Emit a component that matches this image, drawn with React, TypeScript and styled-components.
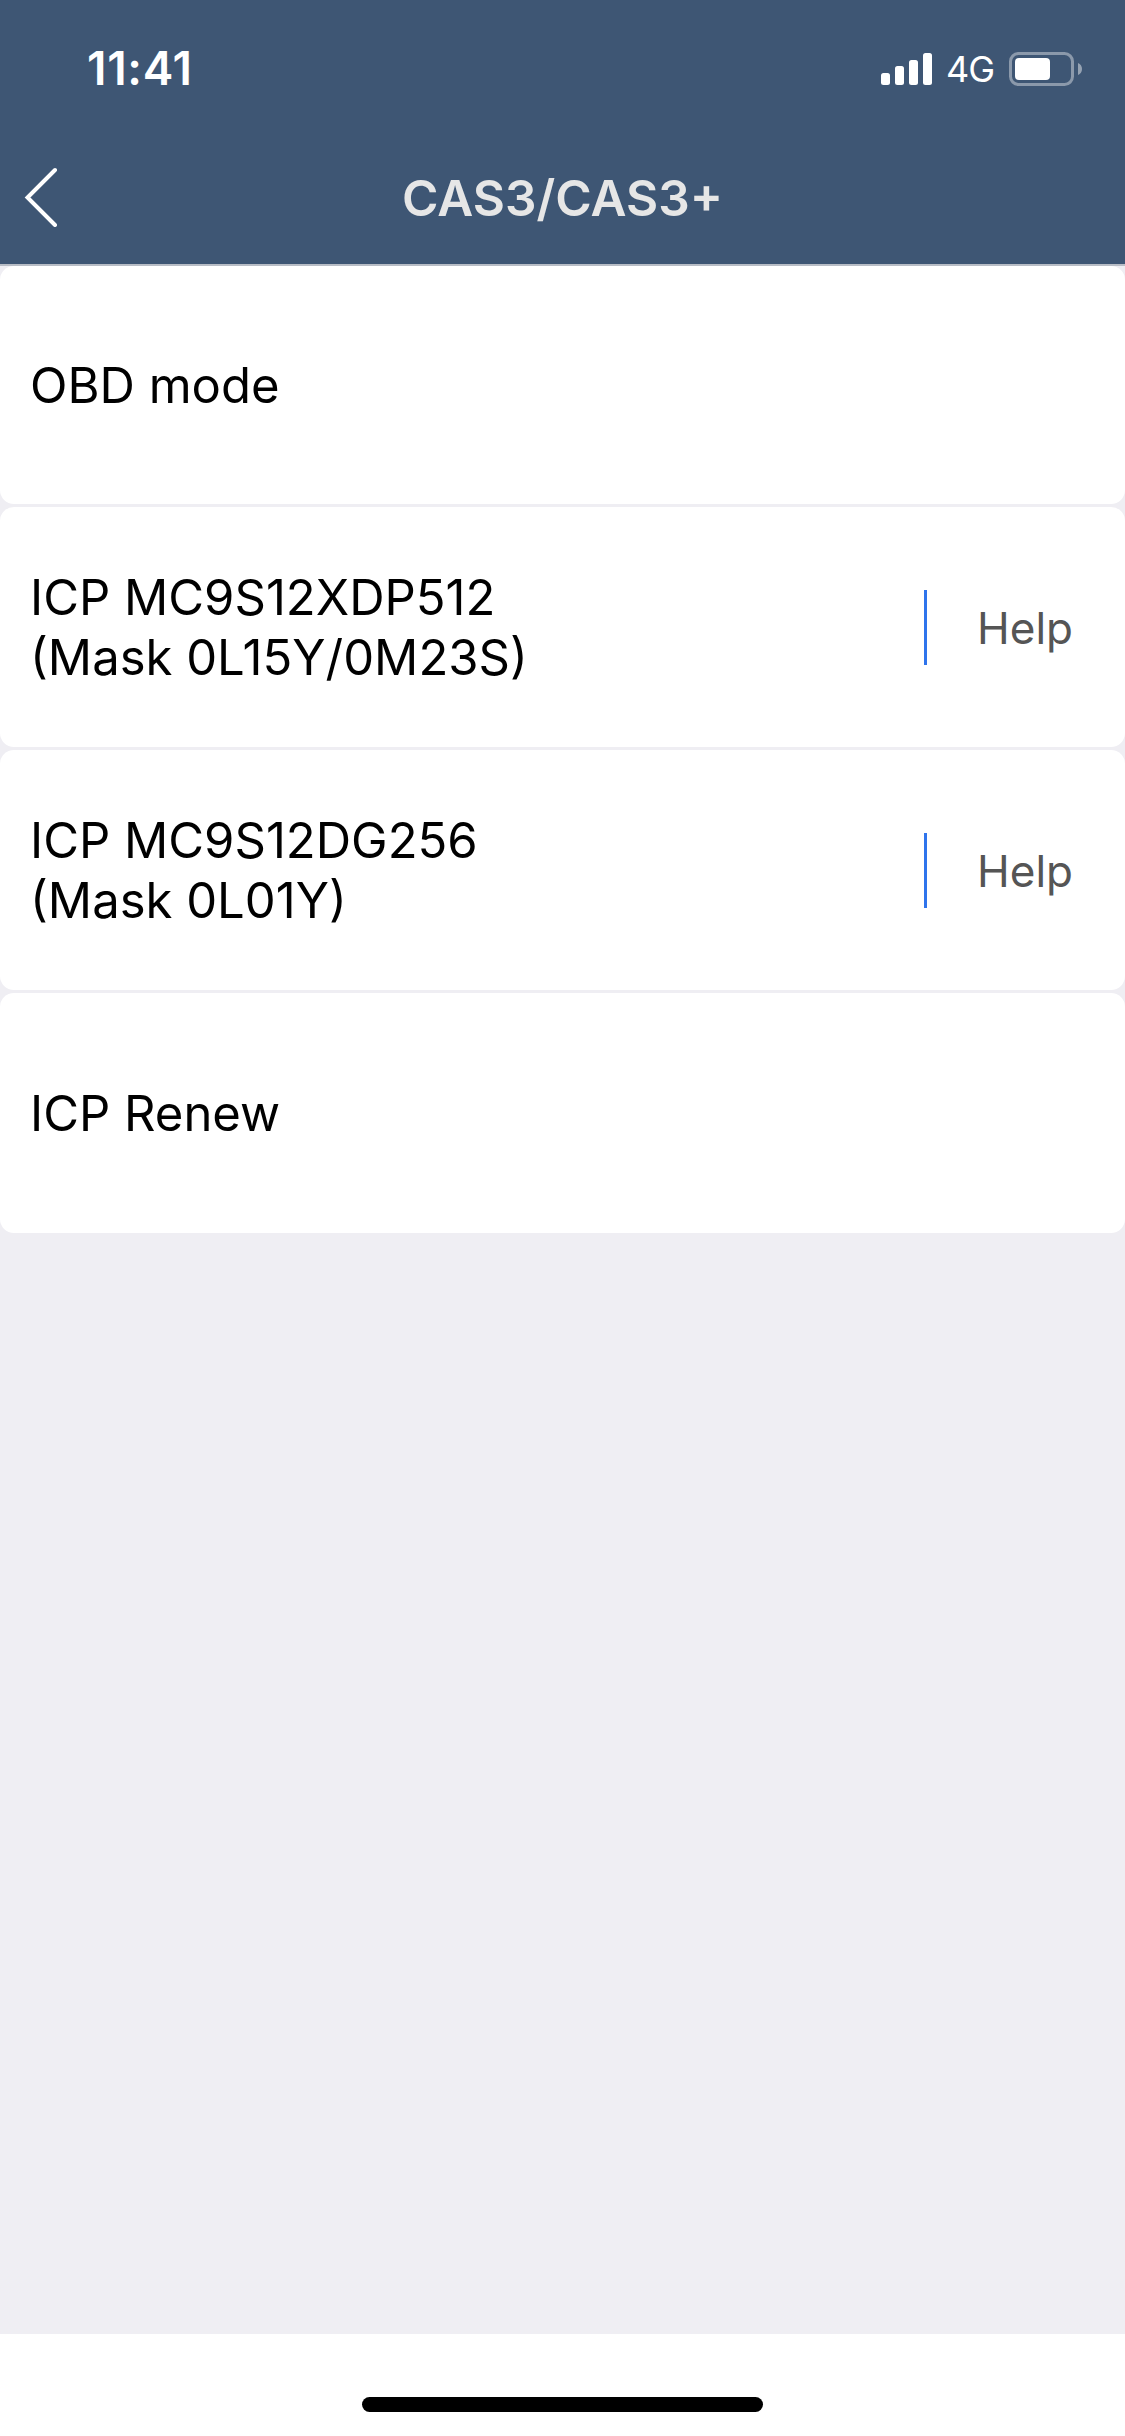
import React from "react";
import styled, { createGlobalStyle } from "styled-components";

const GlobalStyle = createGlobalStyle`
  html, body {
    margin: 0;
    padding: 0;
    background: #efeef3;
  }
  * {
    box-sizing: border-box;
  }
`;

const Page = styled.div`
  width: 1125px;
  height: 2436px;
  display: flex;
  flex-direction: column;
  background: #efeef3;
  font-family: Inter, "Liberation Sans", sans-serif;
  overflow: hidden;
`;

const Header = styled.header`
  height: 266px;
  flex-shrink: 0;
  background: #3e5674;
  border-bottom: 2px solid #b8bdc6;
  display: flex;
  flex-direction: column;
`;

const StatusBar = styled.div`
  height: 132px;
  padding: 44px 43px 0 87px;
  display: flex;
  justify-content: space-between;
  align-items: flex-start;
  color: #fff;
`;

const Time = styled.span`
  font-size: 46px;
  line-height: 48px;
  font-weight: 600;
  letter-spacing: 0.7px;
`;

const StatusIcons = styled.div`
  display: flex;
  align-items: center;
  height: 50px;
`;

const NetworkLabel = styled.span`
  font-size: 36px;
  line-height: 40px;
  font-weight: 400;
  letter-spacing: -1px;
  margin: 0 15px 0 14px;
`;

const NavBar = styled.nav`
  position: relative;
  height: 132px;
  display: flex;
  align-items: center;
  justify-content: center;
`;

const BackButton = styled.div`
  position: absolute;
  left: 24px;
  top: 35px;
  width: 34px;
  height: 60px;
`;

const Title = styled.h1`
  margin: 0;
  font-size: 49.5px;
  line-height: 60px;
  font-weight: 600;
  color: #e6e6e6;
`;

const List = styled.main`
  display: flex;
  flex-direction: column;
  gap: 3px;
  flex: 1;
`;

const Row = styled.div`
  height: 240px;
  background: #fff;
  border-radius: 14px;
  display: flex;
  align-items: center;
  justify-content: space-between;
  padding: 1px 52px 0 30px;

  &:first-child {
    height: 238px;
  }
`;

const RowLabel = styled.div`
  font-size: 49px;
  line-height: 60px;
  color: #000;
`;

const HelpArea = styled.div`
  display: flex;
  align-items: center;
  gap: 50px;
`;

const Divider = styled.div`
  width: 3px;
  height: 75px;
  background: #2f74ec;
`;

const HelpLabel = styled.span`
  font-size: 44px;
  line-height: 60px;
  color: #555;
`;

const BottomBar = styled.footer`
  height: 102px;
  flex-shrink: 0;
  background: #fff;
  display: flex;
  justify-content: center;
  padding-top: 63px;
`;

const HomeIndicator = styled.div`
  width: 401px;
  height: 15px;
  border-radius: 8px;
  background: #000;
`;

const SignalIcon = () => (
  <svg width="51" height="32" viewBox="0 0 51 32" fill="#fff">
    <rect x="0" y="20" width="9" height="12" rx="2.5" />
    <rect x="14" y="13" width="9" height="19" rx="2.5" />
    <rect x="28" y="7" width="9" height="25" rx="2.5" />
    <rect x="42" y="0" width="9" height="32" rx="2.5" />
  </svg>
);

const BatteryIcon = () => (
  <svg width="73" height="34" viewBox="0 0 73 34">
    <rect x="1.5" y="1.5" width="62" height="31" rx="8" fill="none" stroke="#fff" strokeOpacity="0.4" strokeWidth="3" />
    <rect x="6" y="6" width="35" height="22" rx="4" fill="#fff" />
    <path d="M69 11c2.500 1 4 3.200 4 6s-1.500 5-4 6z" fill="#fff" fillOpacity="0.45" />
  </svg>
);

const BackIcon = () => (
  <svg width="34" height="60" viewBox="0 0 34 60" fill="none">
    <path d="M31 3 3.500 30.500 31 58" stroke="#fff" strokeWidth="4" strokeLinecap="round" />
  </svg>
);

const rows = [
  { lines: ["OBD mode"] },
  { lines: ["ICP MC9S12XDP512", "(Mask 0L15Y/0M23S)"], help: true },
  { lines: ["ICP MC9S12DG256", "(Mask 0L01Y)"], help: true },
  { lines: ["ICP Renew"] },
];

export default function App() {
  return (
    <Page>
      <GlobalStyle />
      <Header>
        <StatusBar>
          <Time>11:41</Time>
          <StatusIcons>
            <SignalIcon />
            <NetworkLabel>4G</NetworkLabel>
            <BatteryIcon />
          </StatusIcons>
        </StatusBar>
        <NavBar>
          <BackButton>
            <BackIcon />
          </BackButton>
          <Title>CAS3/CAS3+</Title>
        </NavBar>
      </Header>
      <List>
        {rows.map((row) => (
          <Row key={row.lines[0]}>
            <RowLabel>
              {row.lines.map((line) => (
                <div key={line}>{line}</div>
              ))}
            </RowLabel>
            {row.help && (
              <HelpArea>
                <Divider />
                <HelpLabel>Help</HelpLabel>
              </HelpArea>
            )}
          </Row>
        ))}
      </List>
      <BottomBar>
        <HomeIndicator />
      </BottomBar>
    </Page>
  );
}
